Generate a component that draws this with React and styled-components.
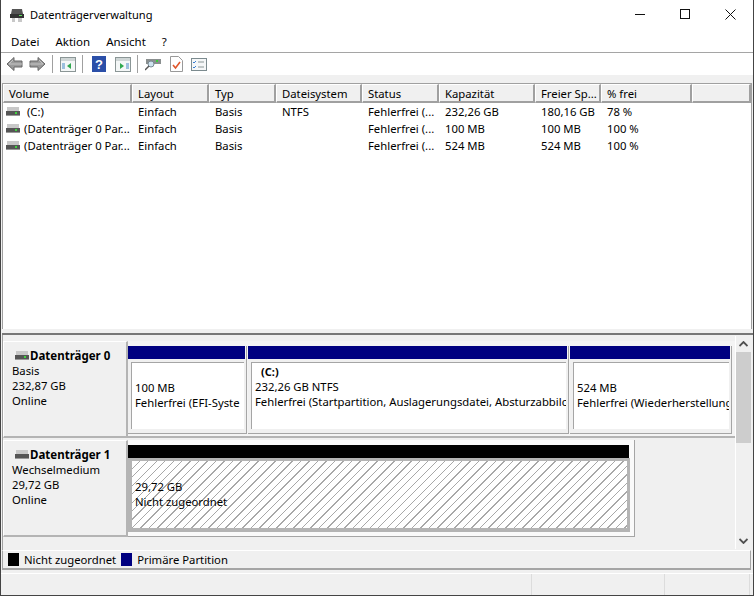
import React from "react";
import styled, { createGlobalStyle } from "styled-components";

const Global = createGlobalStyle`
  html, body { margin: 0; padding: 0; background: #fff; }
  * { box-sizing: border-box; }
`;
const Win = styled.div`
  width: 754px; height: 596px; display: flex; flex-direction: column; overflow: hidden;
  background: #f0f0f0; color: #000; border-left: 1px solid #444; border-right: 1px solid #444; border-bottom: 1px solid #444;
  font-family: "Noto Sans", "Open Sans", sans-serif; font-size: 11.3px; line-height: 15px;
`;
const TitleBar = styled.div`
  height: 30px; flex: none; background: #fff; display: flex; align-items: center; padding-left: 8px; font-size: 11.1px;
`;
const TitleText = styled.span`flex: 1; position: relative; top: -1px; margin-left: 5px;`;
const WinBtn = styled.div`width: 45px; height: 30px; display: flex; align-items: center; justify-content: center; position: relative; top: -1px;`;
const MenuBar = styled.div`
  height: 23px; flex: none; background: #fff; border-bottom: 1px solid #a5a5a5; display: flex; padding-left: 10px; gap: 16px; align-items: center; font-size: 11.5px;
`;
const ToolBar = styled.div`height: 22px; flex: none; background: #fff; display: flex; align-items: center; padding-left: 2px;`;
const ToolIcon = styled.div`width: ${p => p.$w || 23}px; height: 18px; display: flex; align-items: center; justify-content: center;`;
const ToolSep = styled.div`width: 1px; height: 18px; background: #a0a0a0; margin: 0 3px;`;
const Gap = styled.div`height: 8px; flex: none; background: #f0f0f0;`;
const ListPane = styled.div`
  height: 246px; flex: none; margin: 0 1px; background: #fff; border-top: 1px solid #a0a0a0; border-left: 1px solid #a0a0a0; border-right: 1px solid #a0a0a0;
`;
const Splitter = styled.div`height: 2px; flex: none; background: #777; margin: 4px 0 0 1px;`;
const cols = "129px 77px 67px 86px 77px 96px 66px 91px 1fr";
const HeadRow = styled.div`display: grid; grid-template-columns: ${cols}; height: 19px;`;
const HeadCell = styled.div`
  background: #f0f0f0; border-top: 1px solid #fff; border-left: 1px solid #fff; border-right: 2px solid #a0a0a0; border-bottom: 2px solid #a0a0a0;
  padding-left: 5px; display: flex; align-items: center; white-space: nowrap; overflow: hidden;
`;
const Row = styled.div`display: grid; grid-template-columns: ${cols}; height: 17px; background: #fff; align-items: center;`;
const Cell = styled.div`padding-left: 6px; white-space: nowrap; overflow: hidden; display: flex; align-items: center; gap: 4px;`;
const VolCell = styled(Cell)`padding-left: 3px;`;
const Lower = styled.div`flex: 1; display: flex; min-height: 0; margin-left: 1px; border-left: 1px solid #a0a0a0;`;
const Disks = styled.div`width: 732px; flex: none; padding-top: 6px; display: flex; flex-direction: column; gap: 2px;`;
const DiskRow = styled.div`display: flex; height: 97px;`;
const DiskLabel = styled.div`
  width: 125px; flex: none; padding: 6px 0 0 8px; background: #f0f0f0; border-left: 1px solid #fff; border-top: 1px solid #fff; border-right: 2px solid #b4b4b4; border-bottom: 2px solid #b4b4b4;
`;
const DiskName = styled.div`font-weight: 700; font-size: 11.5px; display: flex; align-items: center; gap: 1px; margin-left: 3px; height: 15px;`;
const Line = styled.div`height: 15px;`;
const Volumes = styled.div`
  flex: 1; display: flex; gap: 1px; align-items: flex-start; height: 97px; padding-top: 5px; border-bottom: 2px solid #b4b4b4; background: #f4f4f4;
`;
const Vol = styled.div`
  width: ${p => p.$w}px; flex: none; height: 88px; display: flex; flex-direction: column; border-right: 1px solid #a5a5a5; border-bottom: 1px solid #a5a5a5;
`;
const VolBar = styled.div`height: 13px; background: ${p => p.$c}; flex: none; margin-right: 1px;`;
const VolBody = styled.div`flex: 1; padding: 3px 2px 0 3px; background: #f0f0f0;`;
const VolInner = styled.div`
  height: 67px; background: #fff; border-left: 1px solid #a5a5a5; border-top: 1px solid #a5a5a5; padding: 17px 0 0 3px; white-space: nowrap; overflow: hidden;
`;
const VolInnerC = styled(VolInner)`padding-top: 1px;`;
const VolTitle = styled.div`font-weight: 700; padding-left: 6px; height: 15px; font-size: 11px;`;
const FreeWrap = styled.div`
  width: 507px; height: 97px; padding: 5px 4px 0 0; background: #fafafa; border-right: 1px solid #a5a5a5; border-bottom: 1px solid #a5a5a5;
`;
const FreeBar = styled.div`height: 13px; background: #000; margin-right: 1px;`;
const FreeOuter = styled.div`height: 74px; background: #b4b4b4; padding: 3px 3px 4px 4px;`;
const FreeBody = styled.div`
  height: 67px; padding: 18px 0 0 3px; white-space: nowrap;
  background: #fff repeating-linear-gradient(135deg, #fff 0, #fff 5px, #a8a8a8 5px, #a8a8a8 6px);
`;
const Scroll = styled.div`width: 16px; flex: none; display: flex; flex-direction: column; background: #f0f0f0; border-left: 1px solid #fff; height: 213px; margin-top: 1px;`;
const ScrollBtn = styled.div`height: 16px; display: flex; align-items: center; justify-content: center;`;
const Thumb = styled.div`height: 91px; background: #cdcdcd; flex: none;`;
const ScrollSpace = styled.div`flex: 1;`;
const Legend = styled.div`
  height: 20px; flex: none; margin: 0 2px 0 1px; border-top: 1px solid #fff; border-bottom: 2px solid #a5a5a5; border-right: 1px solid #a5a5a5; border-left: 1px solid #a5a5a5;
  display: flex; align-items: center; padding-left: 5px; gap: 5px;
`;
const Swatch = styled.div`width: 11px; height: 13px; background: ${p => p.$c};`;
const LegendText = styled.span``;
const Status = styled.div`height: 22px; flex: none; margin-top: 3px; display: grid; grid-template-columns: 531px 133px 85px 1fr; border-top: 1px solid #fff;`;
const StatusCell = styled.div`border-right: 1px solid #dcdcdc;`;

const Drive = ({ dark }) => (
  <svg width="14" height="9" viewBox="0 0 14 9">
    <rect x="1" y="0" width="12" height="4" fill="#c8c8c8" />
    <rect x="0" y="4" width="14" height="4" fill="#555" />
    <rect x="0" y="8" width="14" height="1" fill="#999" />
    {!dark && <rect x="9" y="5" width="2" height="2" fill="#3fd43f" />}
  </svg>
);
const Back = ({ flip }) => (
  <svg width="17" height="16" viewBox="0 0 17 16" style={flip ? { transform: "scaleX(-1)" } : undefined}>
    <path d="M8 1.500 1 8l7 6.500V11h8V5H8z" fill="#9a9a9a" stroke="#666" />
    <path d="M7 4 3 8h13" fill="none" stroke="#c4c4c4" />
  </svg>
);
const WinIcon = ({ accent, right }) => (
  <svg width="16" height="15" viewBox="0 0 16 15">
    <rect x=".5" y=".5" width="15" height="14" fill="#f4f7f7" stroke="#8b9696" />
    <rect x="1" y="1" width="14" height="3" fill="#cfd6d6" />
    <path d={right ? "M5 6v6l4-3z" : "M11 6v6l-4-3z"} fill={accent} />
    <rect x={right ? 11 : 2} y="6" width="3" height="6" fill="#9cc0de" />
  </svg>
);

export default function App() {
  const heads = ["Volume", "Layout", "Typ", "Dateisystem", "Status", "Kapazität", "Freier Sp...", "% frei", ""];
  const rows = [
    ["\u00a0(C:)", "Einfach", "Basis", "NTFS", "Fehlerfrei (...", "232,26 GB", "180,16 GB", "78 %"],
    ["(Datenträger 0 Par...", "Einfach", "Basis", "", "Fehlerfrei (...", "100 MB", "100 MB", "100 %"],
    ["(Datenträger 0 Par...", "Einfach", "Basis", "", "Fehlerfrei (...", "524 MB", "524 MB", "100 %"],
  ];
  return (
    <Win>
      <Global />
      <TitleBar>
        <svg width="16" height="15" viewBox="0 0 16 15">
          <path d="M3 1h10l1 5H2z" fill="#555" />
          <rect x="1" y="6" width="14" height="4" fill="#333" />
          <rect x="10" y="7" width="3" height="1" fill="#5fe05f" />
          <path d="M3 10h3v4H3zM9 10h4v4H9z" fill="#c8c8c8" />
        </svg>
        <TitleText>Datenträgerverwaltung</TitleText>
        <WinBtn><svg width="11" height="11"><rect x="0" y="5" width="10" height="1" fill="#111" /></svg></WinBtn>
        <WinBtn><svg width="11" height="11"><rect x=".5" y=".5" width="9" height="9" fill="none" stroke="#111" /></svg></WinBtn>
        <WinBtn><svg width="11" height="11"><path d="M.5.5l10 10M10.500.5l-10 10" stroke="#111" /></svg></WinBtn>
      </TitleBar>
      <MenuBar>
        <span>Datei</span><span>Aktion</span><span>Ansicht</span><span>?</span>
      </MenuBar>
      <ToolBar>
        <ToolIcon><Back /></ToolIcon>
        <ToolIcon><Back flip /></ToolIcon>
        <ToolSep />
        <ToolIcon><WinIcon accent="#2fa84f" /></ToolIcon>
        <ToolSep />
        <ToolIcon $w={25}>
          <svg width="14" height="16" viewBox="0 0 14 16">
            <rect width="14" height="16" fill="#2b4fa8" />
            <text x="7" y="13" fontSize="13" fontWeight="700" fill="#fff" textAnchor="middle" fontFamily="Liberation Sans">?</text>
          </svg>
        </ToolIcon>
        <ToolIcon><WinIcon accent="#2fa84f" right /></ToolIcon>
        <ToolSep />
        <ToolIcon $w={24}>
          <svg width="16" height="14" viewBox="0 0 16 14">
            <rect x="1" y="2" width="15" height="5" fill="#8a8f8f" />
            <rect x="11" y="3" width="2" height="2" fill="#38d038" />
            <circle cx="6" cy="7" r="3" fill="#cfe3ef" stroke="#7a8a94" />
            <path d="M4 9 0 13" stroke="#555" strokeWidth="1.5" />
          </svg>
        </ToolIcon>
        <ToolIcon $w={22}>
          <svg width="13" height="16" viewBox="0 0 13 16">
            <path d="M.5.5h8l4 4v11H.5z" fill="#fff" stroke="#999" />
            <path d="M3 9l2.500 3L10 6" fill="none" stroke="#e0552a" strokeWidth="1.600" />
          </svg>
        </ToolIcon>
        <ToolIcon $w={24}>
          <svg width="16" height="13" viewBox="0 0 16 13">
            <rect x=".5" y=".5" width="15" height="12" fill="#f5f7f8" stroke="#7c8b8f" />
            <path d="M2 4l1 1 2-2M2 9l1 1 2-2" stroke="#3a7fd0" fill="none" />
            <path d="M7 4h6M7 9h6" stroke="#8b9696" />
          </svg>
        </ToolIcon>
      </ToolBar>
      <Gap />
      <ListPane>
        <HeadRow>{heads.map((h, i) => <HeadCell key={i}>{h}</HeadCell>)}</HeadRow>
        {rows.map((r, i) => (
          <Row key={i}>
            {r.map((c, j) => j === 0
              ? <VolCell key={j}><Drive />{c}</VolCell>
              : <Cell key={j}>{c}</Cell>)}
            <Cell />
          </Row>
        ))}
      </ListPane>
      <Splitter />
      <Lower>
        <Disks>
          <DiskRow>
            <DiskLabel>
              <DiskName><Drive />Datenträger 0</DiskName>
              <Line>Basis</Line><Line>232,87 GB</Line><Line>Online</Line>
            </DiskLabel>
            <Volumes>
              <Vol $w={119}>
                <VolBar $c="#000080" />
                <VolBody><VolInner>100 MB<br />Fehlerfrei (EFI-Syste</VolInner></VolBody>
              </Vol>
              <Vol $w={321}>
                <VolBar $c="#000080" />
                <VolBody>
                  <VolInnerC>
                    <VolTitle>(C:)</VolTitle>
                    232,26 GB NTFS<br />Fehlerfrei (Startpartition, Auslagerungsdatei, Absturzabbilc
                  </VolInnerC>
                </VolBody>
              </Vol>
              <Vol $w={162}>
                <VolBar $c="#000080" />
                <VolBody><VolInner>524 MB<br />Fehlerfrei (Wiederherstellung</VolInner></VolBody>
              </Vol>
            </Volumes>
          </DiskRow>
          <DiskRow>
            <DiskLabel>
              <DiskName><Drive dark />Datenträger 1</DiskName>
              <Line>Wechselmedium</Line><Line>29,72 GB</Line><Line>Online</Line>
            </DiskLabel>
            <FreeWrap>
              <FreeBar />
              <FreeOuter>
                <FreeBody>29,72 GB<br />Nicht zugeordnet</FreeBody>
              </FreeOuter>
            </FreeWrap>
          </DiskRow>
        </Disks>
        <Scroll>
          <ScrollBtn><svg width="9" height="6"><path d="M.5 5 4.500 1l4 4" fill="none" stroke="#505050" strokeWidth="1.800" /></svg></ScrollBtn>
          <Thumb />
          <ScrollSpace />
          <ScrollBtn><svg width="9" height="6"><path d="M.5 1l4 4 4-4" fill="none" stroke="#505050" strokeWidth="1.800" /></svg></ScrollBtn>
        </Scroll>
      </Lower>
      <Legend>
        <Swatch $c="#000" /><LegendText>Nicht zugeordnet</LegendText>
        <Swatch $c="#000080" /><LegendText>Primäre Partition</LegendText>
      </Legend>
      <Status><StatusCell /><StatusCell /><StatusCell /><div /></Status>
    </Win>
  );
}
